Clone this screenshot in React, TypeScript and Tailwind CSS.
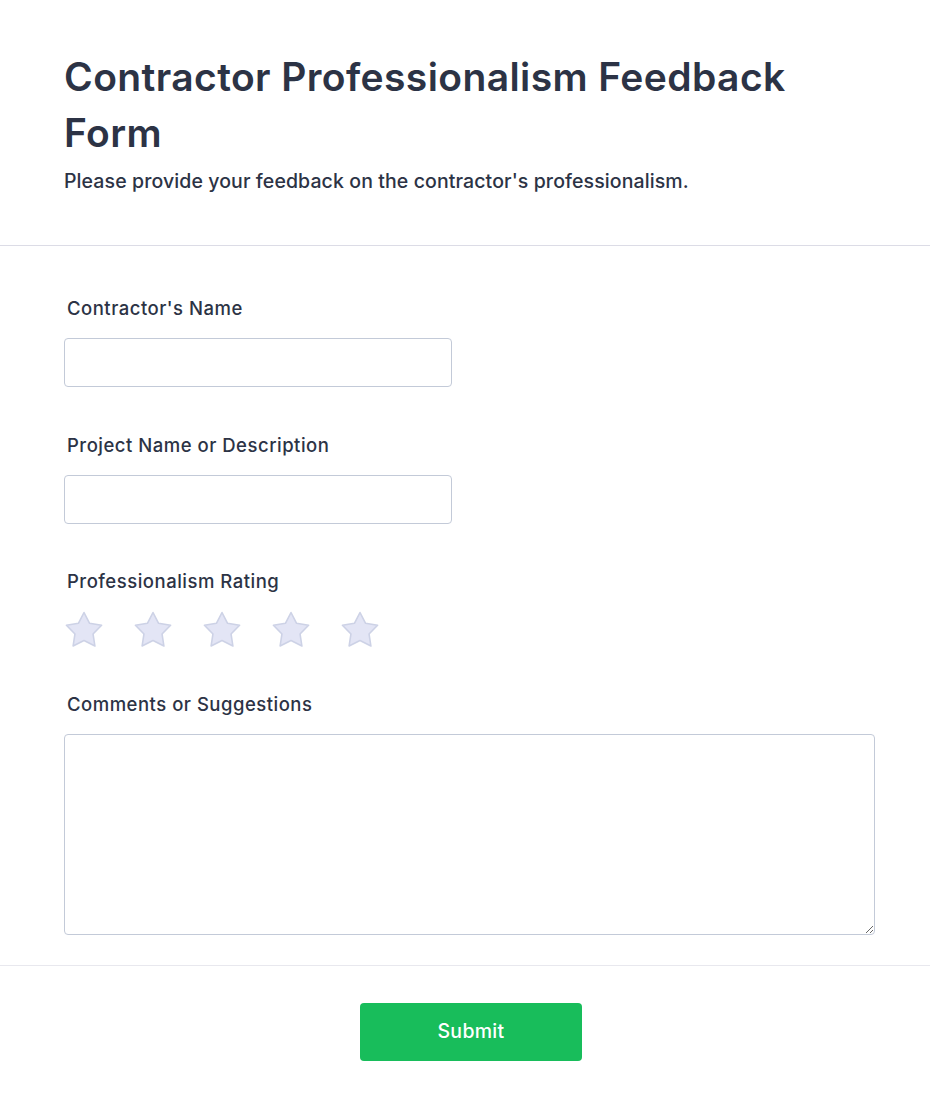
import React from "react";

function Star() {
  return (
    <svg width="40" height="40" viewBox="0 0 40 40" className="block">
      <path
        d="M20 2.5 L25.58 13.31 L37.6 15.3 L29.03 23.94 L30.9 36 L20 30.5 L9.1 36 L10.97 23.94 L2.4 15.3 L14.42 13.31 Z"
        fill="#e3e5f5"
        stroke="#cdd2e6"
        strokeWidth="1.6"
        strokeLinejoin="round"
      />
    </svg>
  );
}

export default function App() {
  return (
    <div className="min-h-[1112px] bg-white text-[#2c3345]" style={{ fontFamily: "Inter, 'Noto Sans', sans-serif" }}>
      <header className="px-16 pt-[49px] pb-[52px] border-b border-[#dcdce6]">
        <h1 className="text-[39px] leading-[56px] font-semibold tracking-[0.4px]">
          Contractor Professionalism Feedback
          <br />
          Form
        </h1>
        <p className="mt-2 text-[19.5px] leading-6 font-medium tracking-[0.1px]">
          Please provide your feedback on the contractor's professionalism.
        </p>
      </header>

      <main className="px-16 pt-[50px] pb-[30px] border-b border-[#e8e8ee]">
        <div className="flex flex-col">
          <label className="pl-[3px] text-[18.5px] leading-6 font-medium tracking-[0.5px]">Contractor's Name</label>
          <input className="mt-[18px] w-[388px] h-[49px] rounded border border-[#c3cad8] bg-white" />
        </div>
        <div className="flex flex-col mt-[46px]">
          <label className="pl-[3px] text-[18.5px] leading-6 font-medium tracking-[0.5px]">Project Name or Description</label>
          <input className="mt-[18px] w-[388px] h-[49px] rounded border border-[#c3cad8] bg-white" />
        </div>
        <div className="flex flex-col mt-[45px]">
          <label className="pl-[3px] text-[18.5px] leading-6 font-medium tracking-[0.5px]">Professionalism Rating</label>
          <div className="mt-[17px] flex gap-[29px]">
            <Star />
            <Star />
            <Star />
            <Star />
            <Star />
          </div>
        </div>
        <div className="flex flex-col mt-[42px]">
          <label className="pl-[3px] text-[18.5px] leading-6 font-medium tracking-[0.5px]">Comments or Suggestions</label>
          <textarea className="mt-[18px] w-[811px] h-[201px] rounded border border-[#c3cad8] bg-white" />
        </div>
      </main>

      <div className="flex justify-center pt-[37px] pl-3">
        <button className="w-[222px] h-[58px] rounded bg-[#18bd5b] text-white text-[19.5px] font-medium tracking-[0.3px]">
          Submit
        </button>
      </div>
    </div>
  );
}
